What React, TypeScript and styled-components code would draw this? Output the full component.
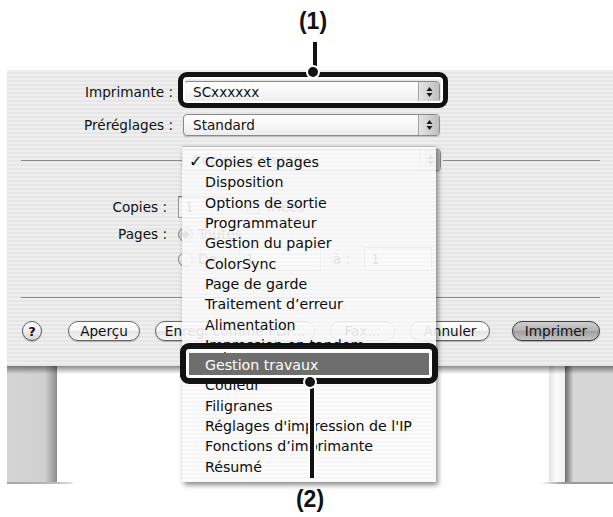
import React from 'react';
import styled, { createGlobalStyle, css } from 'styled-components';

const FONT = `"DejaVu Sans", "Liberation Sans", sans-serif`;

const GlobalStyle = createGlobalStyle`
  html, body {
    margin: 0;
    padding: 0;
    background: #ffffff;
  }
  body {
    font-family: ${FONT};
    color: #111111;
  }
`;

const pinstripe = css`
  background: repeating-linear-gradient(180deg, #eeeeee 0 2px, #e6e6e6 2px 4px);
`;

const Stage = styled.div`
  position: relative;
  width: 613px;
  height: 517px;
  padding: 70px 0 0 7px;
  box-sizing: border-box;
  overflow: hidden;
  font-size: 13.6px;
`;

const Window = styled.div`
  width: 606px;
  display: flex;
  flex-direction: column;
`;

const Sheet = styled.div`
  ${pinstripe}
  height: 296px;
  box-sizing: border-box;
  padding-top: 11px;
  display: flex;
  flex-direction: column;
`;

const FieldRow = styled.div<{ $mt?: number; $h?: number; $gap?: number }>`
  display: flex;
  align-items: center;
  height: ${({ $h }) => $h ?? 22}px;
  margin-top: ${({ $mt }) => $mt ?? 0}px;
  gap: ${({ $gap }) => $gap ?? 10}px;
`;

const Label = styled.span<{ $w: number }>`
  width: ${({ $w }) => $w}px;
  text-align: right;
  white-space: nowrap;
  flex: none;
`;

const Text = styled.span<{ $ml?: number }>`
  margin-left: ${({ $ml }) => $ml ?? 0}px;
  white-space: nowrap;
`;

const PopupBox = styled.div<{ $w: number }>`
  width: ${({ $w }) => $w}px;
  height: 22px;
  box-sizing: border-box;
  display: flex;
  align-items: stretch;
  flex: none;
  border: 1px solid #8a8a8a;
  border-radius: 4px;
  background: linear-gradient(180deg, #ffffff 0%, #f7f7f7 50%, #ececec 100%);
  box-shadow: 0 1px 1px rgba(0, 0, 0, 0.18);
`;

const PopupValue = styled.span`
  flex: 1;
  display: flex;
  align-items: center;
  padding-left: 9px;
  white-space: nowrap;
  overflow: hidden;
`;

const PopupArrows = styled.span`
  width: 20px;
  display: flex;
  align-items: center;
  justify-content: center;
  border-left: 1px solid #a4a4a4;
  border-radius: 0 3px 3px 0;
  background: linear-gradient(90deg, #e4e4e4 0%, #cfcfcf 60%, #bdbdbd 100%);
`;

const GroupHeader = styled.div`
  display: flex;
  align-items: center;
  height: 22px;
  margin-top: 13px;
  padding: 0 13px 0 14px;
`;

const Rule = styled.div<{ $w?: number; $ml?: number }>`
  height: 1px;
  background: #8c8c8c;
  flex: ${({ $w }) => ($w ? 'none' : '1')};
  width: ${({ $w }) => ($w ? `${$w}px` : 'auto')};
  margin-left: ${({ $ml }) => $ml ?? 0}px;
`;

const BottomRule = styled.div`
  height: 1px;
  background: #8c8c8c;
  margin: 26px 13px 0 14px;
`;

const TextField = styled.div<{ $w: number; $h?: number; $ml?: number }>`
  width: ${({ $w }) => $w}px;
  height: ${({ $h }) => $h ?? 22}px;
  margin-left: ${({ $ml }) => $ml ?? 0}px;
  box-sizing: border-box;
  flex: none;
  display: flex;
  align-items: center;
  padding-left: 6px;
  background: #ffffff;
  border: 1px solid #9a9a9a;
  border-top-color: #6e6e6e;
  box-shadow: inset 0 1px 2px rgba(0, 0, 0, 0.2);
`;

const Check = styled.span<{ $ml?: number }>`
  width: 13px;
  height: 13px;
  margin-left: ${({ $ml }) => $ml ?? 0}px;
  flex: none;
  box-sizing: border-box;
  border: 1px solid #7d7d7d;
  border-radius: 2px;
  background: linear-gradient(180deg, #ffffff, #dcdcdc);
`;

const Radio = styled.span<{ $on?: boolean }>`
  width: 15px;
  height: 15px;
  flex: none;
  box-sizing: border-box;
  border: 1px solid #7d7d7d;
  border-radius: 50%;
  background: ${({ $on }) =>
    $on
      ? 'radial-gradient(circle, #333 0 3px, #c8c8c8 3.5px, #eeeeee 100%)'
      : 'linear-gradient(180deg, #ffffff, #dadada)'};
`;

const ButtonBar = styled.div`
  display: flex;
  align-items: center;
  height: 20px;
  margin-top: 23px;
  padding-left: 15px;
`;

const HelpButton = styled.span`
  width: 20px;
  height: 20px;
  flex: none;
  box-sizing: border-box;
  border: 1px solid #5c5c5c;
  border-radius: 50%;
  display: flex;
  align-items: center;
  justify-content: center;
  font-size: 13px;
  font-weight: bold;
  background: linear-gradient(180deg, #ffffff 0%, #f0f0f0 50%, #d4d4d4 100%);
  box-shadow: 0 1px 1px rgba(0, 0, 0, 0.25);
`;

const PillButton = styled.span<{ $w: number; $ml: number; $default?: boolean }>`
  width: ${({ $w }) => $w}px;
  height: 20px;
  margin-left: ${({ $ml }) => $ml}px;
  flex: none;
  box-sizing: border-box;
  display: flex;
  align-items: center;
  justify-content: center;
  white-space: nowrap;
  border-radius: 10px;
  border: 1px solid ${({ $default }) => ($default ? '#3e3e3e' : '#666666')};
  background: ${({ $default }) =>
    $default
      ? 'linear-gradient(180deg, #cfcfcf 0%, #b2b2b2 48%, #9e9e9e 52%, #c4c4c4 100%)'
      : 'linear-gradient(180deg, #ffffff 0%, #f6f6f6 48%, #e6e6e6 52%, #f4f4f4 100%)'};
  box-shadow: 0 1px 1px rgba(0, 0, 0, 0.25);
`;

const Preview = styled.div`
  position: relative;
  height: 116px;
  display: flex;

  &::before {
    content: '';
    position: absolute;
    left: 0;
    right: 0;
    top: 0;
    height: 8px;
    background: linear-gradient(180deg, rgba(0, 0, 0, 0.45), rgba(0, 0, 0, 0));
  }
`;

const Rail = styled.div`
  width: 50px;
  flex: none;
  background: linear-gradient(90deg, #d5d5d5 0%, #d0d0d0 76%, #a9a9a9 90%, #8a8a8a 100%);
`;

const Paper = styled.div`
  width: 492px;
  flex: none;
  background: #ffffff;
`;

const PaperEdge = styled.div`
  width: 16px;
  flex: none;
  background: linear-gradient(90deg, #e2e2e2 0%, #fbfbfb 45%, #f1f1f1 100%);
`;

const Shade = styled.div`
  width: 8px;
  flex: none;
  background: linear-gradient(90deg, #6c6c6c 0%, #9c9c9c 50%, #d2d2d2 100%);
`;

const RightRail = styled.div`
  flex: 1;
  background: #d6d6d6;
`;

const BottomEdge = styled.div`
  height: 2px;
  background: linear-gradient(
    90deg,
    #a6a6a6 0,
    #b8b8b8 45px,
    #d8d8d8 62px,
    #ffffff 68px,
    #ffffff 533px,
    #e2e2e2 540px,
    #9a9a9a 556px,
    #9a9a9a 100%
  );
`;

/* ---------- dropdown menu overlay ---------- */

const Menu = styled.div`
  position: absolute;
  left: 182px;
  top: 146px;
  width: 254px;
  height: 336px;
  box-sizing: border-box;
  padding-top: 5px;
  z-index: 2;
  font-size: 14.2px;
  border-top: 1px solid rgba(150, 150, 150, 0.6);
  background: repeating-linear-gradient(
    180deg,
    rgba(251, 251, 251, 0.9) 0 2px,
    rgba(245, 245, 245, 0.9) 2px 4px
  );
  box-shadow: 2px 3px 5px rgba(0, 0, 0, 0.45);
`;

const MenuItem = styled.div<{ $active?: boolean }>`
  position: relative;
  height: 20.3px;
  display: flex;
  align-items: center;
  padding-left: 23px;
  white-space: nowrap;
  color: ${({ $active }) => ($active ? '#ffffff' : '#0c0c0c')};
  background: ${({ $active }) => ($active ? '#6e6e6e' : 'transparent')};
  box-shadow: ${({ $active }) => ($active ? '0 0 0 2px #6e6e6e' : 'none')};
`;

const CheckMark = styled.span`
  position: absolute;
  left: 7px;
  font-size: 16px;
  font-weight: bold;
  line-height: 1;
`;

/* ---------- callouts ---------- */

const CalloutBox = styled.div<{ $x: number; $y: number; $w: number; $h: number; $b: number; $in: number }>`
  position: absolute;
  left: ${({ $x }) => $x}px;
  top: ${({ $y }) => $y}px;
  width: ${({ $w }) => $w}px;
  height: ${({ $h }) => $h}px;
  box-sizing: border-box;
  z-index: 3;
  border: ${({ $b }) => $b}px solid #121212;
  border-radius: 9px;
  box-shadow: inset 0 0 0 ${({ $in }) => $in}px #ffffff;
`;

const Leader = styled.div<{ $x: number; $y: number; $h: number }>`
  position: absolute;
  left: ${({ $x }) => $x - 4}px;
  top: ${({ $y }) => $y}px;
  width: 4px;
  height: ${({ $h }) => $h}px;
  z-index: 4;
  background: #121212;
  border-left: 2px solid #ffffff;
  border-right: 2px solid #ffffff;
`;

const Dot = styled.div<{ $x: number; $y: number }>`
  position: absolute;
  left: ${({ $x }) => $x - 7}px;
  top: ${({ $y }) => $y - 7}px;
  width: 10px;
  height: 10px;
  border-radius: 50%;
  border: 2px solid #ffffff;
  background: #121212;
  z-index: 5;
`;

const CalloutNumber = styled.div<{ $x: number; $y: number }>`
  position: absolute;
  left: ${({ $x }) => $x - 30}px;
  top: ${({ $y }) => $y}px;
  width: 60px;
  text-align: center;
  font-family: "Liberation Sans", Arial, sans-serif;
  font-weight: bold;
  font-size: 23px;
  line-height: 28px;
  color: #111111;
`;

const UpDown = () => (
  <svg width="7" height="12" viewBox="0 0 7 12">
    <path d="M3.5 1 L6.5 5 L0.5 5 Z" fill="#1a1a1a" />
    <path d="M3.5 11 L6.5 7 L0.5 7 Z" fill="#1a1a1a" />
  </svg>
);

const PopupButton = ({ w, value }: { w: number; value: string }) => (
  <PopupBox $w={w}>
    <PopupValue>{value}</PopupValue>
    <PopupArrows>
      <UpDown />
    </PopupArrows>
  </PopupBox>
);

const MENU_ITEMS: { label: string; checked?: boolean; active?: boolean }[] = [
  { label: 'Copies et pages', checked: true },
  { label: 'Disposition' },
  { label: 'Options de sortie' },
  { label: 'Programmateur' },
  { label: 'Gestion du papier' },
  { label: 'ColorSync' },
  { label: 'Page de garde' },
  { label: 'Traitement d\u2019erreur' },
  { label: 'Alimentation' },
  { label: 'Impression en tandem' },
  { label: 'Gestion travaux', active: true },
  { label: 'Couleur' },
  { label: 'Filigranes' },
  { label: "Réglages d'impression de l'IP" },
  { label: 'Fonctions d\u2019imprimante' },
  { label: 'Résumé' },
];

export default function App() {
  return (
    <>
      <GlobalStyle />
      <Stage>
        <Window>
          <Sheet>
            <FieldRow>
              <Label $w={166}>Imprimante :</Label>
              <PopupButton w={257} value="SCxxxxxx" />
            </FieldRow>
            <FieldRow $mt={11}>
              <Label $w={166}>Préréglages :</Label>
              <PopupButton w={257} value="Standard" />
            </FieldRow>

            <GroupHeader>
              <Rule $w={161} />
              <PopupButton w={259} value="Copies et pages" />
              <Rule $ml={2} />
            </GroupHeader>

            <FieldRow $mt={25} $gap={0}>
              <Label $w={160}>Copies :</Label>
              <TextField $w={45} $ml={11}>1</TextField>
              <Check $ml={24} />
              <Text $ml={5}>Triées</Text>
            </FieldRow>
            <FieldRow $mt={6} $h={20} $gap={0}>
              <Label $w={160}>Pages :</Label>
              <Text $ml={11} />
              <Radio $on />
              <Text $ml={5}>Toutes</Text>
            </FieldRow>
            <FieldRow $mt={3} $h={24} $gap={0}>
              <Label $w={160} />
              <Text $ml={11} />
              <Radio />
              <Text $ml={5}>De :</Text>
              <TextField $w={82} $h={24} $ml={13}>1</TextField>
              <Text $ml={12}>à :</Text>
              <TextField $w={68} $h={24} $ml={14}>1</TextField>
            </FieldRow>

            <BottomRule />

            <ButtonBar>
              <HelpButton>?</HelpButton>
              <PillButton $w={72} $ml={26}>Aperçu</PillButton>
              <PillButton $w={160} $ml={15}>Enreg. comme PDF...</PillButton>
              <PillButton $w={65} $ml={15}>Fax...</PillButton>
              <PillButton $w={80} $ml={15}>Annuler</PillButton>
              <PillButton $w={88} $ml={22} $default>Imprimer</PillButton>
            </ButtonBar>
          </Sheet>

          <Preview>
            <Rail />
            <Paper />
            <PaperEdge />
            <Shade />
            <RightRail />
          </Preview>
          <BottomEdge />
        </Window>

        <Menu>
          {MENU_ITEMS.map((item) => (
            <MenuItem key={item.label} $active={item.active}>
              {item.checked && <CheckMark>✓</CheckMark>}
              {item.label}
            </MenuItem>
          ))}
        </Menu>

        <CalloutNumber $x={313} $y={7}>(1)</CalloutNumber>
        <Leader $x={315} $y={42} $h={30} />
        <CalloutBox $x={178} $y={72} $w={270} $h={36} $b={5} $in={2} />
        <Dot $x={313} $y={72} />

        <CalloutBox $x={180} $y={343} $w={258} $h={41} $b={6} $in={3} />
        <Dot $x={310} $y={382} />
        <Leader $x={312} $y={384} $h={94} />
        <CalloutNumber $x={310} $y={485}>(2)</CalloutNumber>
      </Stage>
    </>
  );
}
